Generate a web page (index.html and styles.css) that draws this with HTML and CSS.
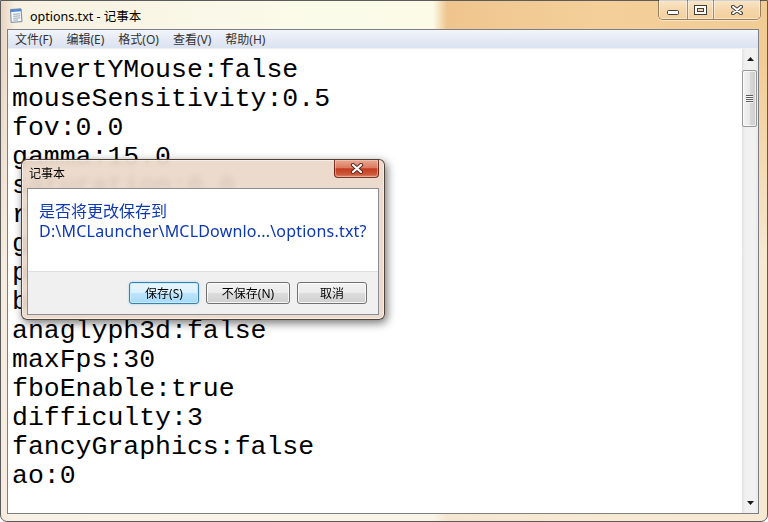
FILE: index.html
```html
<!DOCTYPE html>
<html lang="zh-CN">
<head>
    <meta charset="UTF-8">
    <title>options.txt - 记事本</title>
    <link rel="stylesheet" href="styles.css">
</head>
<body>
    <div class="window">
        <div class="titlebar">
            <svg class="app-icon" width="16" height="16" viewBox="0 0 16 16">
                <path d="M2.5 2.5 L13 1.8 L14 14.6 L3.2 15.4 Z" fill="#f5f9fd" stroke="#7389a3"/>
                <path d="M2.7 2.6 L13 1.9 L13.2 4.3 L2.9 5 Z" fill="#4b8ad0"/>
                <path d="M5 7.3 L12 6.8 M5.2 9.3 L12.2 8.8 M5.3 11.3 L12.3 10.8 M5.4 13.2 L10 12.9" stroke="#9aa6b4" stroke-width="1"/>
            </svg>
            <span class="title">options.txt - 记事本</span>
            <div class="caption">
                <div class="cap-btn cap-min">
                    <svg width="12" height="5"><rect x="0.5" y="0.5" width="11" height="4" rx="1" fill="#fff" stroke="#3e3e3e"/></svg>
                </div>
                <div class="cap-btn cap-max">
                    <svg width="13" height="10">
                        <rect x="0.5" y="0.5" width="12" height="9" fill="none" stroke="#3e3e3e"/>
                        <rect x="2" y="2" width="9" height="6" fill="none" stroke="#fff" stroke-width="2"/>
                        <rect x="3.5" y="3.5" width="6" height="3" fill="none" stroke="#3e3e3e"/>
                    </svg>
                </div>
                <div class="cap-btn cap-close">
                    <svg width="12" height="10">
                        <path d="M2 1.8 L10 8.2 M10 1.8 L2 8.2" stroke="#3e3e3e" stroke-width="4" stroke-linecap="round"/>
                        <path d="M2 1.8 L10 8.2 M10 1.8 L2 8.2" stroke="#fff" stroke-width="2" stroke-linecap="round"/>
                    </svg>
                </div>
            </div>
        </div>

        <div class="client">
            <div class="menubar">
                <span>文件(F)</span>
                <span>编辑(E)</span>
                <span>格式(O)</span>
                <span>查看(V)</span>
                <span>帮助(H)</span>
            </div>
            <div class="editor">
<pre class="doc">invertYMouse:false
mouseSensitivity:0.5
fov:0.0
gamma:15.0
saturation:0.0
renderDistance:8
guiScale:0
particles:0
bobView:true
anaglyph3d:false
maxFps:30
fboEnable:true
difficulty:3
fancyGraphics:false
ao:0</pre>
                <div class="scrollbar">
                    <div class="sb-btn">
                        <svg width="7" height="4"><polygon points="0,4 3.5,0 7,4" fill="#1a1a1a"/></svg>
                    </div>
                    <div class="sb-track">
                        <div class="sb-thumb"><span class="grip"></span></div>
                    </div>
                    <div class="sb-btn">
                        <svg width="7" height="4"><polygon points="0,0 7,0 3.5,4" fill="#1a1a1a"/></svg>
                    </div>
                </div>
            </div>
        </div>
    </div>

    <div class="dialog">
        <div class="dlg-title">记事本</div>
        <div class="dlg-close">
            <svg width="14" height="11">
                <path d="M3 2 L11 9 M11 2 L3 9" stroke="#5e2a20" stroke-width="4.2" stroke-linecap="round"/>
                <path d="M3 2 L11 9 M11 2 L3 9" stroke="#fff" stroke-width="2.2" stroke-linecap="round"/>
            </svg>
        </div>
        <div class="dlg-client">
            <div class="dlg-msg">是否将更改保存到<br><span class="dlg-path">D:\MCLauncher\MCLDownlo...\options.txt?</span></div>
            <div class="dlg-footer">
                <button class="btn btn-default">保存(S)</button>
                <button class="btn btn-wide">不保存(N)</button>
                <button class="btn">取消</button>
            </div>
        </div>
    </div>
</body>
</html>
```

FILE: styles.css
```css
* {
    box-sizing: border-box;
}
body {
    margin: 0;
    width: 768px;
    height: 522px;
    overflow: hidden;
    position: relative;
    font-family: "Noto Sans", "Noto Sans CJK SC", sans-serif;
    font-size: 12px;
    color: #000;
}
.window {
    width: 768px;
    height: 522px;
    display: flex;
    flex-direction: column;
    border: 1px solid #5b5b5b;
    border-radius: 0 0 7px 7px;
    background:
        linear-gradient(180deg, rgba(250, 246, 236, 0) 60px, rgba(248, 242, 230, 0.75) 260px),
        linear-gradient(90deg, #e9d3c0 0, #f7f1e2 14px, #fbfbea 300px, #fbfbe8 432px, #efc58d 446px, #f4cf99 600px, #f2cc95 100%);
}
.titlebar {
    height: 28px;
    display: flex;
    align-items: center;
}
.app-icon {
    margin-left: 7px;
}
.title {
    margin-left: 6px;
    font-size: 12.5px;
    color: #000;
}
.caption {
    margin-left: auto;
    margin-right: 6px;
    align-self: flex-start;
    margin-top: -1px;
    height: 20px;
    display: flex;
    border: 1px solid rgba(40, 30, 20, 0.45);
    border-top: none;
    border-radius: 0 0 5px 5px;
    overflow: hidden;
    box-shadow: 0 1px 0 rgba(255, 255, 255, 0.5);
}
.cap-btn {
    display: flex;
    align-items: center;
    justify-content: center;
    background: linear-gradient(180deg, rgba(255, 255, 255, 0.5), rgba(255, 255, 255, 0.2) 50%, rgba(255, 255, 255, 0.05));
    box-shadow: inset 0 0 0 1px rgba(255, 255, 255, 0.45);
}
.cap-btn + .cap-btn {
    border-left: 1px solid rgba(40, 30, 20, 0.4);
}
.cap-min {
    width: 28px;
}
.cap-min svg {
    margin-top: 6px;
}
.cap-max {
    width: 26px;
}
.cap-close {
    width: 47px;
}
.client {
    flex: 1;
    margin: 0 8px 7px 6px;
    border: 1px solid #7d7f86;
    display: flex;
    flex-direction: column;
    background: #fff;
}
.menubar {
    height: 19px;
    display: flex;
    gap: 14px;
    padding-left: 7px;
    align-items: center;
    font-size: 12px;
    color: #333;
    background: linear-gradient(180deg, #f2f5fb, #e5eaf5 50%, #dbe2f0);
    border-bottom: 1px solid #eef0f4;
}
.editor {
    flex: 1;
    display: flex;
    min-height: 0;
}
.doc {
    flex: 1;
    margin: 0;
    padding: 7px 0 0 4px;
    font-family: "Liberation Mono", monospace;
    font-size: 26.5px;
    line-height: 29px;
    color: #000;
    overflow: hidden;
}
.scrollbar {
    width: 16px;
    display: flex;
    flex-direction: column;
    background: linear-gradient(90deg, #e2e2e2, #f0f0f0 3px, #f2f2f2 12px, #eaeaea);
}
.sb-btn {
    height: 20px;
    display: flex;
    align-items: center;
    justify-content: center;
}
.sb-track {
    flex: 1;
}
.sb-thumb {
    margin: 1px 1px 0 0;
    height: 57px;
    border: 1px solid #979797;
    border-radius: 2px;
    background: linear-gradient(90deg, #f4f4f4, #e8e8e8 50%, #d9d9d9 51%, #cdcdcd);
    box-shadow: inset 0 0 0 1px rgba(255, 255, 255, 0.7);
    display: flex;
    align-items: center;
    justify-content: center;
}
.grip {
    width: 7px;
    height: 8px;
    background: repeating-linear-gradient(180deg, #5c5c5c 0 1px, #f8f8f8 1px 2px);
}
.dialog {
    position: absolute;
    left: 21px;
    top: 159px;
    width: 364px;
    height: 161px;
    display: flex;
    flex-direction: column;
    border: 1px solid rgba(40, 28, 20, 0.8);
    border-radius: 6px;
    background: rgba(234, 215, 199, 0.9);
    backdrop-filter: blur(3px);
    box-shadow: 2px 3px 10px rgba(0, 0, 0, 0.55), inset 0 0 0 1px rgba(255, 255, 255, 0.55);
}
.dlg-title {
    height: 28px;
    line-height: 28px;
    padding-left: 7px;
    font-size: 12px;
}
.dlg-close {
    position: absolute;
    top: 0;
    right: 5px;
    width: 45px;
    height: 18px;
    display: flex;
    align-items: center;
    justify-content: center;
    border: 1px solid rgba(80, 20, 10, 0.75);
    border-top: none;
    border-radius: 0 0 4px 4px;
    background: linear-gradient(180deg, #e9a892, #dc7b62 45%, #c43c1f 52%, #cd5a3c 85%, #e38d70);
    box-shadow: inset 0 0 0 1px rgba(255, 220, 200, 0.45);
}
.dlg-client {
    flex: 1;
    margin: 0 5px 4px 5px;
    border: 1px solid #8b8e96;
    display: flex;
    flex-direction: column;
}
.dlg-msg {
    height: 82px;
    padding: 12px 0 0 11px;
    background: #fff;
    font-size: 16px;
    line-height: 20px;
    color: #0d38b4;
}
.dlg-path {
    letter-spacing: 0.2px;
}
.dlg-footer {
    flex: 1;
    display: flex;
    justify-content: flex-end;
    align-items: flex-start;
    gap: 7px;
    padding: 10px 11px 0 0;
    background: #f0f0f0;
    border-top: 1px solid #dfdfdf;
}
.btn {
    width: 70px;
    height: 22px;
    padding: 0;
    font-family: "Noto Sans", "Noto Sans CJK SC", sans-serif;
    font-size: 12px;
    color: #000;
    border: 1px solid #707070;
    border-radius: 3px;
    background: linear-gradient(180deg, #f2f2f2, #ebebeb 50%, #dddddd 50%, #cfcfcf);
    box-shadow: inset 0 0 0 1px rgba(255, 255, 255, 0.8);
}
.btn-wide {
    width: 84px;
}
.btn-default {
    border-color: #3c7fb1;
    background: linear-gradient(180deg, #eaf6fd, #d9f0fc 50%, #bee6fd 50%, #a7d9f5);
    box-shadow: inset 0 0 0 1px #c6ecfc, 0 0 2px rgba(60, 160, 220, 0.5);
}
```
